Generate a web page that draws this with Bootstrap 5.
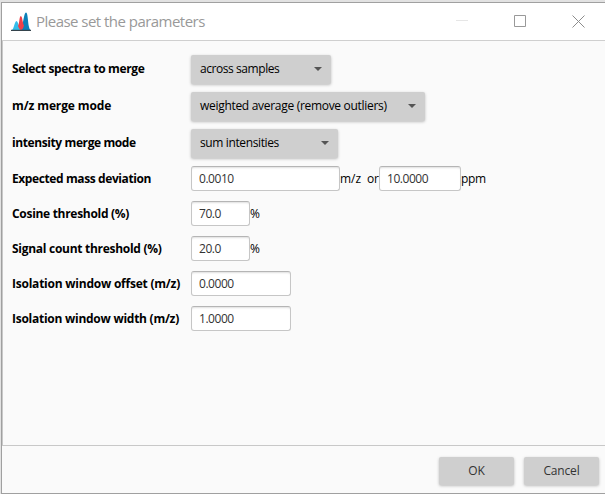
<!DOCTYPE html>
<html lang="en">
<head>
<meta charset="utf-8">
<title>Please set the parameters</title>
<link href="https://cdn.jsdelivr.net/npm/bootstrap@5.3.0/dist/css/bootstrap.min.css" rel="stylesheet">
<style>
body{margin:0;width:605px;height:494px;overflow:hidden;background:#e2e2e2;font-family:"Open Sans","Noto Sans",sans-serif;font-size:12px;line-height:16px;color:#000;padding:2px 0 0 1px}
.dialog-window{height:492px;background:#fafafa;border:1px solid #a0a0a0;border-right:0}
.title-strip{height:38px;background:#fff;border-bottom:1px solid #cfcfcf;padding-left:9px;flex:none}
.title-name{font-size:15px;color:#999;letter-spacing:-.53px;margin-left:5px;padding-bottom:2px}
.win-controls{margin-right:20px;gap:46px}
.param-body{border-left:1px solid #c8c8c8;border-bottom:1px solid #c8c8c8;padding:14px 0 0 9px}
.param-row{margin-bottom:10px;height:25px}
.select-row{margin-bottom:8px;height:29px}
.param-name{width:179px;font-weight:700;letter-spacing:-.4px;flex:none;white-space:nowrap}
.select-row .param-name{padding-bottom:1px}
#n1{letter-spacing:-.36px}#n2{letter-spacing:-.12px}#n5{letter-spacing:-.3px}#n6{letter-spacing:-.28px}#n7{letter-spacing:-.23px}#n8{letter-spacing:-.26px}
#c1{letter-spacing:-.43px}#c2{letter-spacing:-.3px}#c3{letter-spacing:-.38px}
.combo{height:29px;border:0;border-radius:2px;background:#cfcfcf;box-shadow:0 1px 3px rgba(0,0,0,.25);padding:0 9px 1px;font-size:12px;line-height:16px;color:#000;white-space:nowrap}
.arrow-down{border:4px solid transparent;border-top-color:#555;border-bottom:0}
.field{height:25px;border:1px solid #c6c6c6;border-top-color:#b5b5b5;border-radius:3px;padding:0 7px;font-size:12px;line-height:16px;color:#333;box-shadow:inset 0 2px 2px -1px rgba(0,0,0,.13);letter-spacing:-.45px;flex:none}
.unit{white-space:nowrap;letter-spacing:-.3px;flex:none}
.mz-unit{width:27px;letter-spacing:0}
.or-unit{width:12px}
.w149{width:149px}.w82{width:82px}.w59{width:59px}.w100p{width:100px}
.w140{width:140px}.w234{width:234px}.w147{width:147px}
.footer-strip{height:47px;flex:none;gap:10px;padding:11px 6px 0 0}
.action{width:75px;height:28px;padding:0 0 1px;border:0;border-radius:2px;background:#cfcfcf;box-shadow:0 1px 3px rgba(0,0,0,.25);font-size:12px;line-height:16px;color:#333;letter-spacing:-.15px}
</style>
<script src="https://cdn.jsdelivr.net/npm/bootstrap@5.3.0/dist/js/bootstrap.bundle.min.js"></script>
</head>
<body>
<div class="dialog-window d-flex flex-column">
  <header class="title-strip d-flex align-items-center">
    <svg width="20" height="20" viewBox="0 0 20 20"><path d="M1 18C3 17 3.500 9.500 5.500 9C7.500 9.500 8 17 10 18Z" fill="#35bdea"/><path d="M9 18C12.500 15 12.500 1 15 .5C17.500 1 16.500 15 19.500 18Z" fill="#0b80b8"/><path d="M9.800 4C8.300 4.500 8.500 11 7 14Q8.500 18 10 18Q12 17.500 13 13.500C11.500 11 11.500 4.500 9.800 4Z" fill="#ef4048"/><path d="M0 17.800H20V19H0Z" fill="#34434c"/></svg>
    <span class="title-name">Please set the parameters</span>
    <div class="win-controls d-flex align-items-center ms-auto">
      <svg width="12" height="13" viewBox="0 0 12 13"><path d="M0 5.500H12" stroke="#e6e6e6"/></svg>
      <svg width="12" height="13" viewBox="0 0 12 13"><path d="M.5 .5H11.500V11.500H.5Z" fill="none" stroke="#999"/></svg>
      <svg width="13" height="13" viewBox="0 0 13 13"><path d="M.5 .5L12.500 12.500M12.500 .5L.5 12.500" stroke="#8c8c8c"/></svg>
    </div>
  </header>
  <main class="param-body flex-grow-1">
    <div class="select-row d-flex align-items-center"><span class="param-name" id="n1">Select spectra to merge</span><button class="combo w140 d-flex align-items-center justify-content-between"><span id="c1">across samples</span><span class="arrow-down"></span></button></div>
    <div class="select-row d-flex align-items-center"><span class="param-name" id="n2">m/z merge mode</span><button class="combo w234 d-flex align-items-center justify-content-between"><span id="c2">weighted average (remove outliers)</span><span class="arrow-down"></span></button></div>
    <div class="select-row d-flex align-items-center"><span class="param-name" id="n3">intensity merge mode</span><button class="combo w147 d-flex align-items-center justify-content-between"><span id="c3">sum intensities</span><span class="arrow-down"></span></button></div>
    <div class="param-row d-flex align-items-center"><span class="param-name" id="n4">Expected mass deviation</span><input class="field w149" value="0.0010"><span class="unit mz-unit">m/z</span><span class="unit or-unit">or</span><input class="field w82" value="10.0000"><span class="unit">ppm</span></div>
    <div class="param-row d-flex align-items-center"><span class="param-name" id="n5">Cosine threshold (%)</span><input class="field w59" value="70.0"><span class="unit">%</span></div>
    <div class="param-row d-flex align-items-center"><span class="param-name" id="n6">Signal count threshold (%)</span><input class="field w59" value="20.0"><span class="unit">%</span></div>
    <div class="param-row d-flex align-items-center"><span class="param-name" id="n7">Isolation window offset (m/z)</span><input class="field w100p" value="0.0000"></div>
    <div class="param-row d-flex align-items-center"><span class="param-name" id="n8">Isolation window width (m/z)</span><input class="field w100p" value="1.0000"></div>
  </main>
  <footer class="footer-strip d-flex justify-content-end">
    <button class="action">OK</button><button class="action">Cancel</button>
  </footer>
</div>
</body>
</html>
